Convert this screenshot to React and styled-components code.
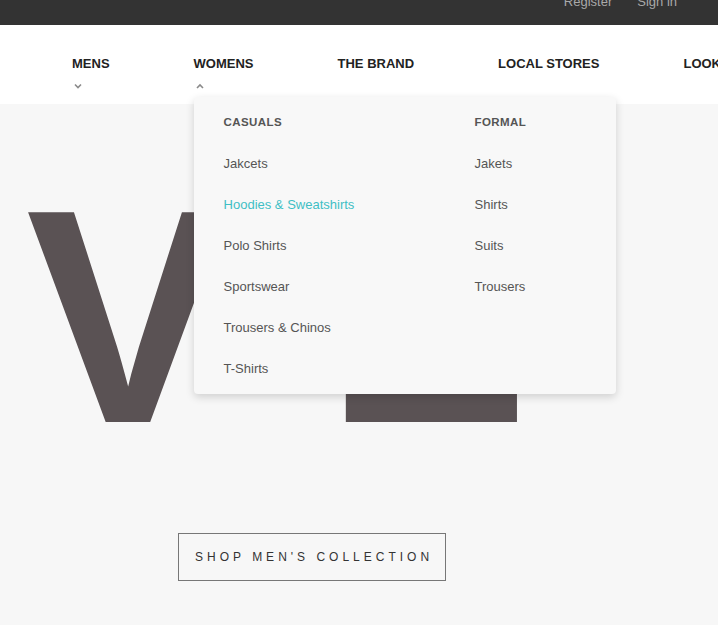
import React from "react";
import styled, { createGlobalStyle } from "styled-components";

const Global = createGlobalStyle`
  html, body { margin: 0; padding: 0; }
  body {
    background: #f7f7f7;
    font-family: "Liberation Sans", Arial, sans-serif;
    overflow: hidden;
  }
`;

const Page = styled.div`
  width: 718px;
  height: 625px;
  overflow: hidden;
  background: #f7f7f7;
`;

const TopBar = styled.div`
  height: 25px;
  background: #333333;
  display: flex;
  justify-content: flex-end;
  align-items: flex-start;
  gap: 25px;
  padding-right: 41px;
  overflow: hidden;
`;

const TopLink = styled.a`
  font-size: 13px;
  line-height: 15px;
  margin-top: -6px;
  color: #a9a9a9;
  font-weight: 400;
  text-decoration: none;
`;

const NavBar = styled.nav`
  height: 79px;
  background: #ffffff;
  display: flex;
  align-items: flex-start;
  padding-left: 72px;
  gap: 84px;
  white-space: nowrap;
  position: relative;
  z-index: 2;
`;

const NavItem = styled.div`
  position: relative;
  padding-top: 31px;
  display: flex;
  flex-direction: column;
  align-items: flex-start;
`;

const NavLabel = styled.span`
  font-size: 13px;
  line-height: 15px;
  font-weight: 700;
  color: #222;
`;

const Chevron = styled.svg`
  margin-top: 12px;
  margin-left: 2px;
  width: 8px;
  height: 6px;
`;

const Dropdown = styled.div`
  position: absolute;
  top: 72px;
  left: 0;
  width: 422px;
  height: 297px;
  box-sizing: border-box;
  background: #f8f8f8;
  border-radius: 4px;
  box-shadow: 0 3px 9px rgba(0, 0, 0, 0.16);
  padding: 18px 30px 0;
  display: grid;
  grid-template-columns: 251px 1fr;
`;

const Column = styled.div`
  display: flex;
  flex-direction: column;
`;

const ColTitle = styled.div`
  font-size: 11.5px;
  line-height: 15px;
  font-weight: 700;
  letter-spacing: 0.4px;
  color: #555;
  margin-bottom: 26px;
`;

const ColLink = styled.a`
  font-size: 13px;
  line-height: 15px;
  height: 41px;
  color: ${(p) => (p.$active ? "#3fbfc5" : "#555")};
  text-decoration: none;
`;

const Hero = styled.main`
  padding-left: 26px;
`;

const BigTitle = styled.h1`
  margin: 60px 0 0;
  font-family: "Liberation Sans", Arial, sans-serif;
  font-size: 305px;
  line-height: 305px;
  font-weight: 700;
  letter-spacing: 96px;
  color: #5a5254;
  white-space: nowrap;
`;

const ShopButton = styled.button`
  margin: 64px 0 0 152px;
  height: 48px;
  padding: 0 12px 0 16px;
  background: transparent;
  border: 1px solid #777;
  font-family: "Liberation Sans", Arial, sans-serif;
  font-size: 12px;
  letter-spacing: 4px;
  color: #333;
  cursor: pointer;
`;

const ChevronIcon = ({ up }) => (
  <Chevron viewBox="0 0 8 6">
    <path
      d={up ? "M1 5 L4 2 L7 5" : "M1 1.5 L4 4.5 L7 1.5"}
      fill="none"
      stroke="#8a8a8a"
      strokeWidth="1.6"
    />
  </Chevron>
);

const casuals = [
  "Jakcets",
  "Hoodies & Sweatshirts",
  "Polo Shirts",
  "Sportswear",
  "Trousers & Chinos",
  "T-Shirts",
];
const formal = ["Jakets", "Shirts", "Suits", "Trousers"];

export default function App() {
  return (
    <Page>
      <Global />
      <TopBar>
        <TopLink href="#">Register</TopLink>
        <TopLink href="#">Sign in</TopLink>
      </TopBar>
      <NavBar>
        <NavItem>
          <NavLabel>MENS</NavLabel>
          <ChevronIcon />
        </NavItem>
        <NavItem>
          <NavLabel>WOMENS</NavLabel>
          <ChevronIcon up />
          <Dropdown>
            <Column>
              <ColTitle>CASUALS</ColTitle>
              {casuals.map((c) => (
                <ColLink key={c} href="#" $active={c === "Hoodies & Sweatshirts"}>
                  {c}
                </ColLink>
              ))}
            </Column>
            <Column>
              <ColTitle>FORMAL</ColTitle>
              {formal.map((c) => (
                <ColLink key={c} href="#">
                  {c}
                </ColLink>
              ))}
            </Column>
          </Dropdown>
        </NavItem>
        <NavItem>
          <NavLabel>THE BRAND</NavLabel>
        </NavItem>
        <NavItem>
          <NavLabel>LOCAL STORES</NavLabel>
        </NavItem>
        <NavItem>
          <NavLabel>LOOKBOOK</NavLabel>
        </NavItem>
      </NavBar>
      <Hero>
        <BigTitle>VE</BigTitle>
        <ShopButton>SHOP MEN'S COLLECTION</ShopButton>
      </Hero>
    </Page>
  );
}
